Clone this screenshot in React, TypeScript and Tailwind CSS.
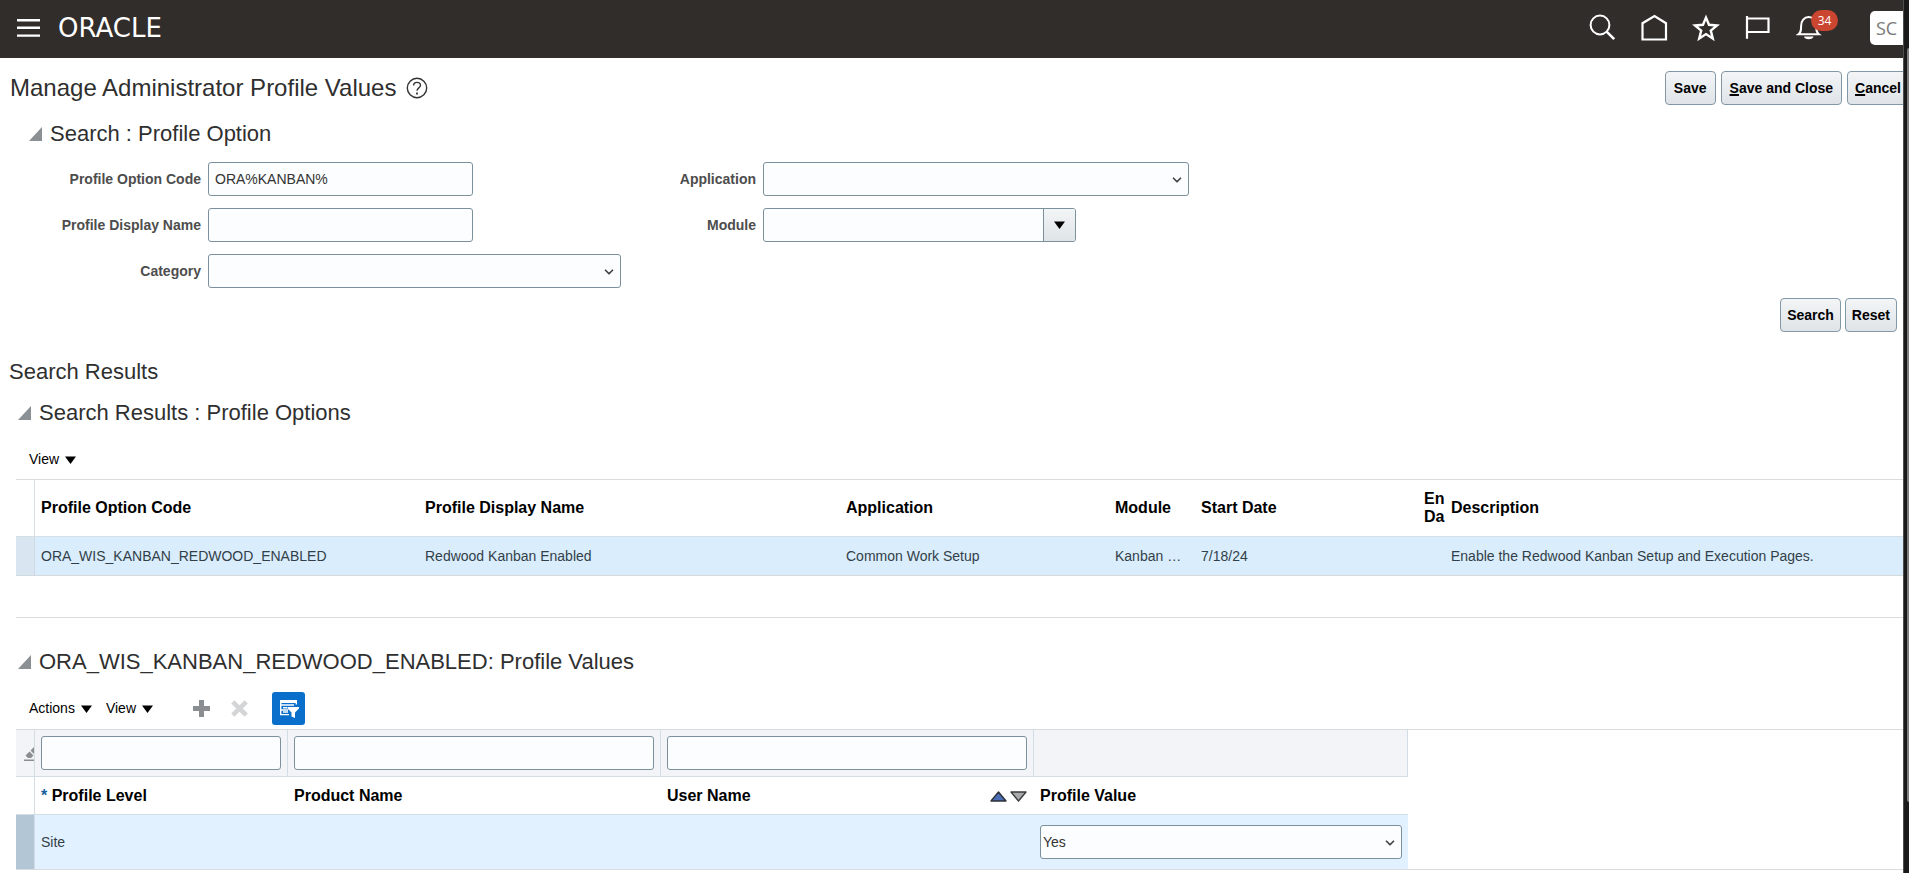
import type { ReactNode } from 'react'
import { ChevronDown } from 'lucide-react'

const fieldClass =
  'h-[34px] w-full rounded-[3px] border border-[#7d919c] bg-[#fbfdfe] px-1.5 text-[14px] text-[#333333] outline-none'
const buttonClass =
  'h-[34px] rounded-[4px] border border-[#8298a6] bg-linear-to-b from-[#f3f5f6] to-[#dfe4e8] text-[14px] font-bold whitespace-nowrap text-black'

function CaretDown() {
  return (
    <svg width="11" height="8" viewBox="0 0 11 8" aria-hidden="true">
      <path d="M0 0.5h11L5.5 8z" fill="#000" />
    </svg>
  )
}

function Select({ id, label, options }: { id: string; label?: string; options: string[] }) {
  return (
    <div className="relative w-full">
      <select
        id={id}
        aria-label={label}
        className="h-[34px] w-full appearance-none rounded-[3px] border border-[#7d919c] bg-[#fbfdfe] px-0.5 text-[14px] text-[#333333] outline-none"
      >
        {options.map((option) => (
          <option key={option}>{option}</option>
        ))}
      </select>
      <ChevronDown className="pointer-events-none absolute top-[11px] right-[5px] size-3.5 text-[#444444]" strokeWidth={3} />
    </div>
  )
}

function FieldLabel({ htmlFor, children }: { htmlFor: string; children: ReactNode }) {
  return (
    <label htmlFor={htmlFor} className="text-right text-[14px] font-bold text-[#4d4d4d]">
      {children}
    </label>
  )
}

function SectionHeading({ children }: { children: ReactNode }) {
  return (
    <div className="flex h-8 items-center gap-2 pl-0.5">
      <button aria-label="Collapse section" aria-expanded="true">
        <svg width="13" height="14" viewBox="0 0 13 14">
          <path d="M13 0v14H0z" fill="#8b9095" />
        </svg>
      </button>
      <h2 className="text-[22px] leading-8 text-[#2f2f2f]">{children}</h2>
    </div>
  )
}

function MenuButton({ children }: { children: ReactNode }) {
  return (
    <button className="flex items-center gap-1.5 text-[14px] text-black">
      {children}
      <CaretDown />
    </button>
  )
}

function Header() {
  return (
    <header className="flex h-[58px] shrink-0 items-center bg-[#312d2a] pb-0.5 pl-[17px] text-white">
      <button aria-label="Navigator">
        <svg width="23" height="18" viewBox="0 0 23 18" fill="#fff">
          <path d="M0 0h23v2.4H0zM0 7.6h23V10H0zM0 15.4h23v2.4H0z" />
        </svg>
      </button>
      <a href="#" className="ml-[18px] font-['DejaVu_Sans',sans-serif] text-[26px] leading-none">
        ORACLE
      </a>
      <nav className="ml-auto flex items-center gap-6">
        <button aria-label="Search">
          <svg width="28" height="28" viewBox="0 0 28 28" fill="none" stroke="#fff" strokeWidth="2">
            <circle cx="12" cy="11" r="9.4" />
            <path d="M18.6 17.6l7.600 7.600" strokeWidth="2.6" />
          </svg>
        </button>
        <button aria-label="Home">
          <svg width="28" height="28" viewBox="0 0 28 28" fill="none" stroke="#fff" strokeWidth="2.2">
            <path d="M2.500 25.500V9.200L14.500 2l11.500 7.200v16.300z" />
          </svg>
        </button>
        <button aria-label="Favorites">
          <svg width="28" height="28" viewBox="0 0 28 28" fill="none" stroke="#fff" strokeWidth="2.4">
            <path d="M14 3.600l3 7.200 8 .7-6.200 5.100 2 7.900-6.800-4.400-6.800 4.400 2-7.900L3 11.500l8-.7z" />
          </svg>
        </button>
        <button aria-label="Watchlist">
          <svg width="28" height="28" viewBox="0 0 28 28" fill="none" stroke="#fff" strokeWidth="2.2">
            <path d="M3 2v22.700M3 4.500h21.500v13.500H3" />
          </svg>
        </button>
        <button aria-label="Notifications" className="relative">
          <svg width="28" height="28" viewBox="0 0 28 28" fill="none" stroke="#fff" strokeWidth="2">
            <path d="M2.500 20.200c2.600-2 2.600-4 2.600-8.200 0-5 3-9 7.600-9s7.600 4 7.600 9c0 4.200 0 6.200 2.600 8.200z" />
            <path d="M8 22.500h9.500a4.800 3.200 0 0 1-9.500 0z" fill="#fff" stroke="none" />
          </svg>
          <span className="absolute -top-1 left-[15px] flex h-[21px] w-[27px] items-center justify-center rounded-full bg-[#cb4631] font-['Open_Sans',sans-serif] text-[12px]">
            34
          </span>
        </button>
      </nav>
      <button className="ml-[46px] h-[34px] w-[33px] rounded-l-[5px] bg-white pl-[6px] text-left font-['Open_Sans',sans-serif] text-[18px] leading-none text-[#7a7a7a]">
        SC
      </button>
    </header>
  )
}

function SearchForm() {
  return (
    <form onSubmit={(event) => event.preventDefault()}>
      <div className="flex items-start pt-3">
        <div className="grid grid-cols-[191px_413px] items-center gap-x-[7px] gap-y-3">
          <FieldLabel htmlFor="code">Profile Option Code</FieldLabel>
          <div className="w-[265px]">
            <input id="code" type="text" defaultValue="ORA%KANBAN%" className={fieldClass} />
          </div>
          <FieldLabel htmlFor="display-name">Profile Display Name</FieldLabel>
          <div className="w-[265px]">
            <input id="display-name" type="text" className={fieldClass} />
          </div>
          <FieldLabel htmlFor="category">Category</FieldLabel>
          <Select id="category" options={['']} />
        </div>
        <div className="grid grid-cols-[135px_426px] items-center gap-x-[7px] gap-y-3">
          <FieldLabel htmlFor="application">Application</FieldLabel>
          <Select id="application" options={['']} />
          <FieldLabel htmlFor="module">Module</FieldLabel>
          <div className="flex h-[34px] w-[313px] overflow-hidden rounded-[3px] border border-[#7d919c] bg-[#fbfdfe]">
            <input id="module" type="text" className="min-w-0 flex-1 px-1.5 text-[14px] outline-none" />
            <button
              type="button"
              aria-label="Search module"
              className="flex w-8 items-center justify-center border-l border-[#7d919c] bg-linear-to-b from-[#f3f5f6] to-[#dfe4e8]"
            >
              <CaretDown />
            </button>
          </div>
        </div>
      </div>
      <div className="flex justify-end gap-1 pt-[10px] pr-1.5">
        <button type="submit" className={`${buttonClass} px-1.5`}>Search</button>
        <button type="reset" className={`${buttonClass} px-1.5`}>Reset</button>
      </div>
    </form>
  )
}

function OptionsTable() {
  const head = 'border-b border-[#d6dfe6] pl-[6px] text-left text-[16px] leading-[18px] font-bold text-black'
  const cell = 'border-b border-[#d5dadd] pl-[6px] text-[14px] text-[#333f48]'

  return (
    <table className="w-full table-fixed border-separate border-spacing-0 border-t border-[#d9dcde]">
      <colgroup>
        <col className="w-[19px]" />
        <col className="w-[384px]" />
        <col className="w-[421px]" />
        <col className="w-[269px]" />
        <col className="w-[86px]" />
        <col className="w-[223px]" />
        <col className="w-[27px]" />
        <col />
      </colgroup>
      <thead>
        <tr className="h-[57px]">
          <td className="border-r border-b border-[#d6dfe6]" />
          <th className={head}>Profile Option Code</th>
          <th className={head}>Profile Display Name</th>
          <th className={head}>Application</th>
          <th className={head}>Module</th>
          <th className={head}>Start Date</th>
          <th className={head} title="End Date">
            En
            <br />
            Da
          </th>
          <th className={head}>Description</th>
        </tr>
      </thead>
      <tbody>
        <tr className="h-[39px] bg-[#d9edfd]">
          <td className="border-r border-b border-[#d0d9e0] bg-[#d9e5f1]" />
          <td className={cell}>ORA_WIS_KANBAN_REDWOOD_ENABLED</td>
          <td className={cell}>Redwood Kanban Enabled</td>
          <td className={cell}>Common Work Setup</td>
          <td className={cell}>Kanban …</td>
          <td className={cell}>7/18/24</td>
          <td className={cell} />
          <td className={cell}>Enable the Redwood Kanban Setup and Execution Pages.</td>
        </tr>
      </tbody>
    </table>
  )
}

function ValuesToolbar() {
  return (
    <div className="flex h-[51px] items-center pt-[14px] pb-1 pl-[13px]">
      <MenuButton>Actions</MenuButton>
      <div className="ml-[14px]">
        <MenuButton>View</MenuButton>
      </div>
      <button aria-label="Add" className="ml-10">
        <svg width="17" height="17" viewBox="0 0 17 17" fill="#8b8e91">
          <path d="M6 0h5v6h6v5h-6v6H6v-6H0V6h6z" />
        </svg>
      </button>
      <button aria-label="Delete" disabled className="ml-[21px]">
        <svg width="17" height="17" viewBox="0 0 17 17" stroke="#d3d5d6" strokeWidth="4.6">
          <path d="M1.8 1.8l13.4 13.4M15.2 1.8L1.8 15.2" />
        </svg>
      </button>
      <button
        aria-label="Query by Example"
        className="ml-6 flex size-[33px] items-center justify-center rounded-[3px] bg-[#0a6fcb]"
      >
        <svg width="20" height="20" viewBox="0 0 20 20" fill="none" stroke="#fff">
          <path d="M1 2.500h17" strokeWidth="3" />
          <path d="M1.700 1v15M17.300 1v4.500" strokeWidth="1.400" />
          <path d="M1 6h14M4 8.700h4M1 11h8M4 13h5M1 15.600h9" strokeWidth="1.400" />
          <path d="M8.500 8H20v1.500l-4 4V19l-3.500-1.500v-4l-4-4z" fill="#fff" stroke="none" />
        </svg>
      </button>
    </div>
  )
}

function ValuesTable() {
  const filter = 'border-r border-b border-[#d3dde5] bg-[#f2f4f8] px-[6px]'
  const head = 'border-b border-[#d3dde5] pl-[6px] text-left text-[16px] font-bold text-black'
  const cell = 'px-[6px] text-[14px] text-[#333f48]'

  return (
    <div className="border-y border-[#d9dcde]">
      <table className="w-[1392px] table-fixed border-separate border-spacing-0">
        <colgroup>
          <col className="w-[19px]" />
          <col className="w-[253px]" />
          <col className="w-[373px]" />
          <col className="w-[373px]" />
          <col className="w-[374px]" />
        </colgroup>
        <thead>
          <tr className="h-[47px]">
            <td className="overflow-hidden border-r border-b border-[#d3dde5] bg-[#f2f4f8] pl-2">
              <button aria-label="Clear All" className="block w-[10px] overflow-hidden">
                <svg width="16" height="16" viewBox="0 0 16 16" className="max-w-none" fill="#8b8e91">
                  <path d="M0 14.500h16V16H0zM6.500 5.500L11 1l4 4-4.500 4.500zM5.500 6.500l4 4L7 13H4L1.500 10.500z" />
                </svg>
              </button>
            </td>
            <td className={filter}>
              <input type="text" aria-label="Filter Profile Level" className={fieldClass} />
            </td>
            <td className={filter}>
              <input type="text" aria-label="Filter Product Name" className={fieldClass} />
            </td>
            <td className={filter}>
              <input type="text" aria-label="Filter User Name" className={fieldClass} />
            </td>
            <td className={filter} />
          </tr>
          <tr className="h-[38px]">
            <td className="border-r border-b border-[#d3dde5]" />
            <th className={head}>
              <span className="text-[#1a5fa0]">*</span> Profile Level
            </th>
            <th className={head}>Product Name</th>
            <th className={head}>
              <div className="flex items-center justify-between pr-[7px]">
                User Name
                <span className="flex gap-[3px] pt-0.5">
                  <button aria-label="Sort Ascending">
                    <svg width="17" height="11" viewBox="0 0 17 11" fill="#4a6db5" stroke="#2c3038" strokeWidth="1.4">
                      <path d="M8.500 1L16 10H1z" strokeLinejoin="round" />
                    </svg>
                  </button>
                  <button aria-label="Sort Descending">
                    <svg width="17" height="11" viewBox="0 0 17 11" fill="#a8aaab" stroke="#3a3c3e" strokeWidth="1.4">
                      <path d="M8.500 10L16 1H1z" strokeLinejoin="round" />
                    </svg>
                  </button>
                </span>
              </div>
            </th>
            <th className={head}>Profile Value</th>
          </tr>
        </thead>
        <tbody>
          <tr className="h-[54px] bg-[#e2f1ff]">
            <td className="border-r border-[#d3dde5] bg-[#b3c6d6]" />
            <td className={cell}>Site</td>
            <td className={cell} />
            <td className={cell} />
            <td className={cell}>
              <Select id="profile-value" label="Profile Value" options={['Yes', 'No']} />
            </td>
          </tr>
        </tbody>
      </table>
    </div>
  )
}

export default function App() {
  return (
    <div className="flex min-h-screen overflow-hidden bg-white font-['Liberation_Sans',Arial,sans-serif]">
      <div className="flex min-w-0 flex-1 flex-col overflow-hidden">
        <Header />
        <main>
          <div className="flex items-center pt-[13px] pl-[10px]">
            <h1 className="text-[24px] leading-8 text-[#2f2f2f]">Manage Administrator Profile Values</h1>
            <button aria-label="Help" className="ml-[10px]">
              <svg width="22" height="22" viewBox="0 0 22 22" fill="none" stroke="#333" strokeWidth="1.4">
                <circle cx="11" cy="11" r="9.700" />
                <path d="M7.600 8.600c0-4.300 6.900-4.300 6.900-.3 0 2.600-3.500 2.600-3.500 5.400" />
                <path d="M11 15.600v1.800" strokeWidth="1.800" />
              </svg>
            </button>
            {/* the last button runs off the visible edge */}
            <div className="-mr-[6px] ml-auto flex gap-[5px]">
              <button className={`${buttonClass} px-2`}>Save</button>
              <button className={`${buttonClass} px-2`}>
                <span className="underline decoration-2">S</span>ave and Close
              </button>
              <button className={`${buttonClass} px-[7px]`}>
                <span className="underline decoration-2">C</span>ancel
              </button>
            </div>
          </div>

          <section className="pt-[13px] pl-[10px]">
            <div className="pl-[17px]">
              <SectionHeading>Search : Profile Option</SectionHeading>
            </div>
            <SearchForm />
          </section>

          <h2 className="pt-6 pl-[9px] text-[22px] leading-8 text-[#2f2f2f]">Search Results</h2>

          <section className="pt-[9px] pl-4">
            <SectionHeading>Search Results : Profile Options</SectionHeading>
            <div className="flex h-[50px] items-end pb-[9px] pl-[13px]">
              <MenuButton>View</MenuButton>
            </div>
            <div className="h-[139px] border-b border-[#d9dcde]">
              <OptionsTable />
            </div>
          </section>

          <section className="pt-7 pl-4">
            <SectionHeading>ORA_WIS_KANBAN_REDWOOD_ENABLED: Profile Values</SectionHeading>
            <ValuesToolbar />
            <ValuesTable />
          </section>
        </main>
      </div>

      <div className="flex w-1.5 shrink-0 justify-end border-l border-[#4d4f4e] bg-[#191a19] pt-12 pb-[71px]">
        <div className="w-0.5 rounded-l-sm bg-[#7c7e7d]" />
      </div>
    </div>
  )
}
